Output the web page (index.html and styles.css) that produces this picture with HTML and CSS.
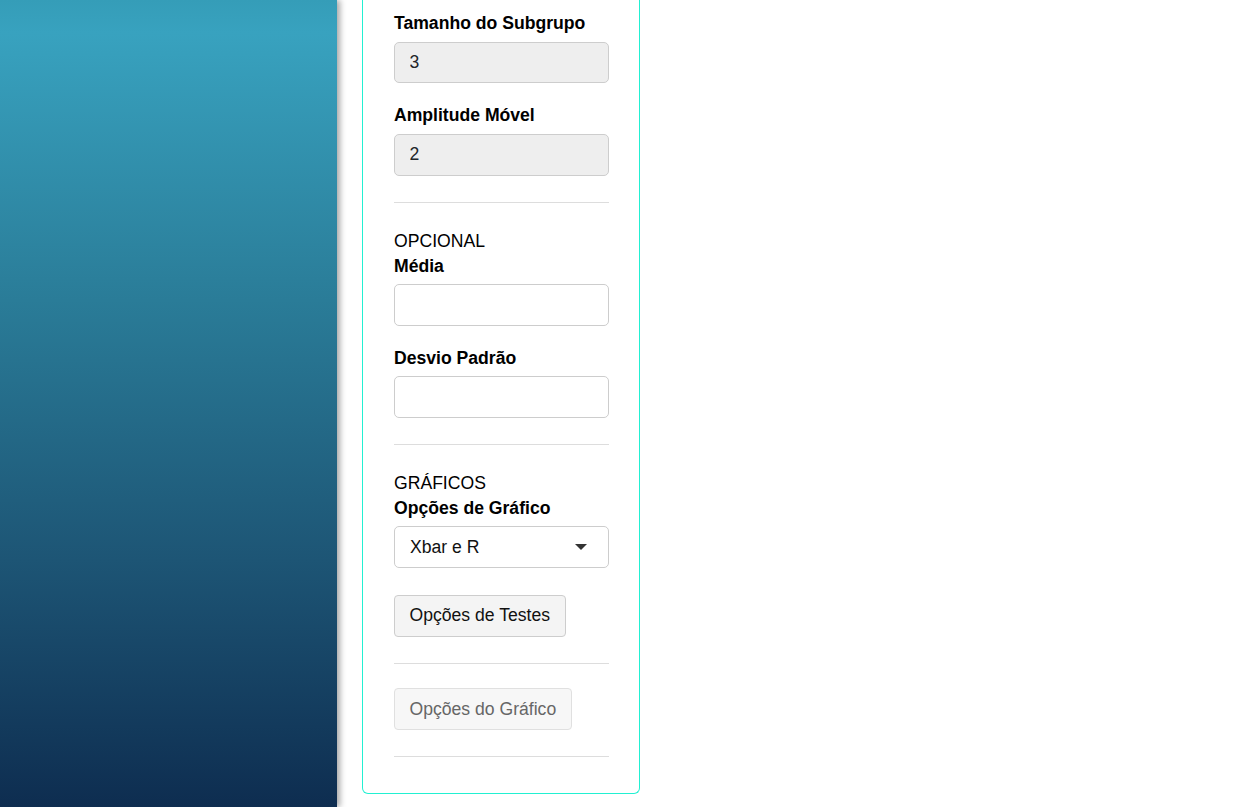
FILE: index.html
```html
<!DOCTYPE html>
<html lang="pt-BR">
<head>
    <meta charset="UTF-8">
    <meta name="viewport" content="width=device-width, initial-scale=1.0">
    <title>Carta de Controle</title>
    <link rel="stylesheet" href="styles.css">
</head>
<body>
    <div class="sidebar"></div>

    <div class="main">
        <div class="panel">
            <div class="field">
                <label for="subgroup">Tamanho do Subgrupo</label>
                <input type="text" id="subgroup" class="form-input readonly" value="3" readonly>
            </div>
            <div class="field">
                <label for="range">Amplitude Móvel</label>
                <input type="text" id="range" class="form-input readonly" value="2" readonly>
            </div>

            <hr>

            <div class="section-title">OPCIONAL</div>
            <div class="field">
                <label for="mean">Média</label>
                <input type="text" id="mean" class="form-input">
            </div>
            <div class="field">
                <label for="sd">Desvio Padrão</label>
                <input type="text" id="sd" class="form-input">
            </div>

            <hr>

            <div class="section-title">GRÁFICOS</div>
            <div class="field">
                <label for="chartType">Opções de Gráfico</label>
                <div class="select-box" id="chartType">
                    <span>Xbar e R</span>
                    <span class="caret"></span>
                </div>
            </div>
            <button class="btn">Opções de Testes</button>

            <hr>

            <button class="btn" disabled>Opções do Gráfico</button>

            <hr>
        </div>
    </div>
</body>
</html>
```

FILE: styles.css
```css
body {
    margin: 0;
    display: flex;
    height: 100vh;
    overflow: hidden;
    font-family: "Liberation Sans", Arial, sans-serif;
    font-size: 17.6px;
    line-height: 25px;
    color: #111;
    background: #fff;
}
.sidebar {
    width: 337px;
    flex-shrink: 0;
    background: linear-gradient(to bottom, #359db8 0, #38a2bf 33px, #2a7c98 300px, #1d5575 560px, #0e2d50 807px);
    box-shadow: 3px 0 6px rgba(0, 0, 0, 0.35);
    position: relative;
    z-index: 1;
}
.main {
    padding-left: 25px;
}
.panel {
    width: 215px;
    padding: 9.7px 30px 11.8px 31px;
    border: 1px solid #22f0d2;
    border-top: 0;
    border-radius: 0 0 6px 6px;
}
.field {
    margin-bottom: 18.5px;
}
.field label {
    display: block;
    padding-top: 1.5px;
    margin-bottom: 5.5px;
    font-weight: bold;
    color: #000;
}
.section-title {
    padding-top: 1.5px;
    margin-bottom: -1.5px;
    color: #000;
}
.form-input {
    display: block;
    box-sizing: border-box;
    width: 100%;
    height: 41.8px;
    padding: 0 14.5px;
    font-family: inherit;
    font-size: 17.6px;
    color: #212529;
    background: #fff;
    border: 1px solid #cdcdcd;
    border-radius: 5px;
    outline: none;
}
.form-input.readonly {
    background: #eee;
}
.select-box {
    box-sizing: border-box;
    height: 41.8px;
    padding: 0 21px 0 15px;
    display: flex;
    align-items: center;
    justify-content: space-between;
    border: 1px solid #cdcdcd;
    border-radius: 5px;
    color: #111;
}
.caret {
    width: 0;
    height: 0;
    border-left: 6px solid transparent;
    border-right: 6px solid transparent;
    border-top: 6px solid #333;
}
hr {
    border: 0;
    border-top: 1px solid #ddd;
    margin: 25.9px 0 24.4px;
}
.btn {
    display: block;
    height: 41.8px;
    padding: 0 14.5px;
    font-family: inherit;
    font-size: 17.6px;
    color: #111;
    background: #f4f4f4;
    border: 1px solid #cdcdcd;
    border-radius: 4px;
    margin-top: 26.8px;
    cursor: pointer;
}
hr + .btn {
    margin-top: 0;
}
.btn:disabled {
    color: #666;
    background: #f7f7f7;
    border-color: #e0e0e0;
    cursor: default;
}
```
